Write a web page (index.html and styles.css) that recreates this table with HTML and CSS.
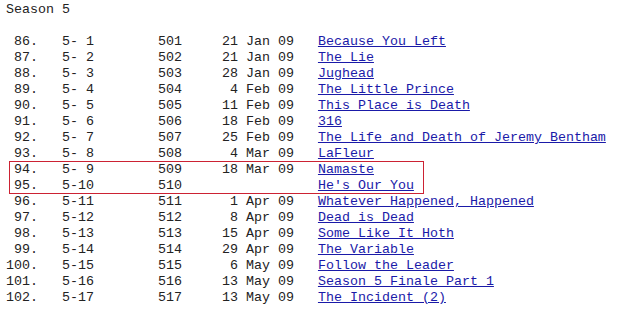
FILE: index.html
```html
<!DOCTYPE html>
<html>
<head>
<meta charset="utf-8">
<link rel="stylesheet" href="styles.css">
</head>
<body>
<div class="listing">
<div class="row">Season 5</div>
<div class="row"> </div>
<div class="row"> 86.   5- 1        501     21 Jan 09   <a href="#">Because You Left</a></div>
<div class="row"> 87.   5- 2        502     21 Jan 09   <a href="#">The Lie</a></div>
<div class="row"> 88.   5- 3        503     28 Jan 09   <a href="#">Jughead</a></div>
<div class="row"> 89.   5- 4        504      4 Feb 09   <a href="#">The Little Prince</a></div>
<div class="row"> 90.   5- 5        505     11 Feb 09   <a href="#">This Place is Death</a></div>
<div class="row"> 91.   5- 6        506     18 Feb 09   <a href="#">316</a></div>
<div class="row"> 92.   5- 7        507     25 Feb 09   <a href="#">The Life and Death of Jeremy Bentham</a></div>
<div class="row"> 93.   5- 8        508      4 Mar 09   <a href="#">LaFleur</a></div>
<div class="group-highlight">
<div class="row"> 94.   5- 9        509     18 Mar 09   <a href="#">Namaste</a></div>
<div class="row"> 95.   5-10        510                 <a href="#">He's Our You</a></div>
<div class="highlight-box"></div>
</div>
<div class="row"> 96.   5-11        511      1 Apr 09   <a href="#">Whatever Happened, Happened</a></div>
<div class="row"> 97.   5-12        512      8 Apr 09   <a href="#">Dead is Dead</a></div>
<div class="row"> 98.   5-13        513     15 Apr 09   <a href="#">Some Like It Hoth</a></div>
<div class="row"> 99.   5-14        514     29 Apr 09   <a href="#">The Variable</a></div>
<div class="row">100.   5-15        515      6 May 09   <a href="#">Follow the Leader</a></div>
<div class="row">101.   5-16        516     13 May 09   <a href="#">Season 5 Finale Part 1</a></div>
<div class="row">102.   5-17        517     13 May 09   <a href="#">The Incident (2)</a></div>
</div>
</body>
</html>
```
FILE: styles.css
```css
html, body {
  margin: 0;
  background: #ffffff;
}
body {
  padding: 2px 0 0 6px;
}
.listing {
  font-family: "Courier New", "Liberation Mono", monospace;
  font-size: 13.333px;
  line-height: 16px;
  color: #222222;
}
.row {
  height: 16px;
  white-space: pre;
}
.listing a {
  color: #1a1aa8;
  text-decoration: underline;
}
.group-highlight {
  position: relative;
}
.highlight-box {
  position: absolute;
  left: 3px;
  top: -1px;
  bottom: 0;
  width: 413px;
  border-style: solid;
  border-width: 1px;
  border-color: rgb(204, 34, 51);
  pointer-events: none;
}
```
